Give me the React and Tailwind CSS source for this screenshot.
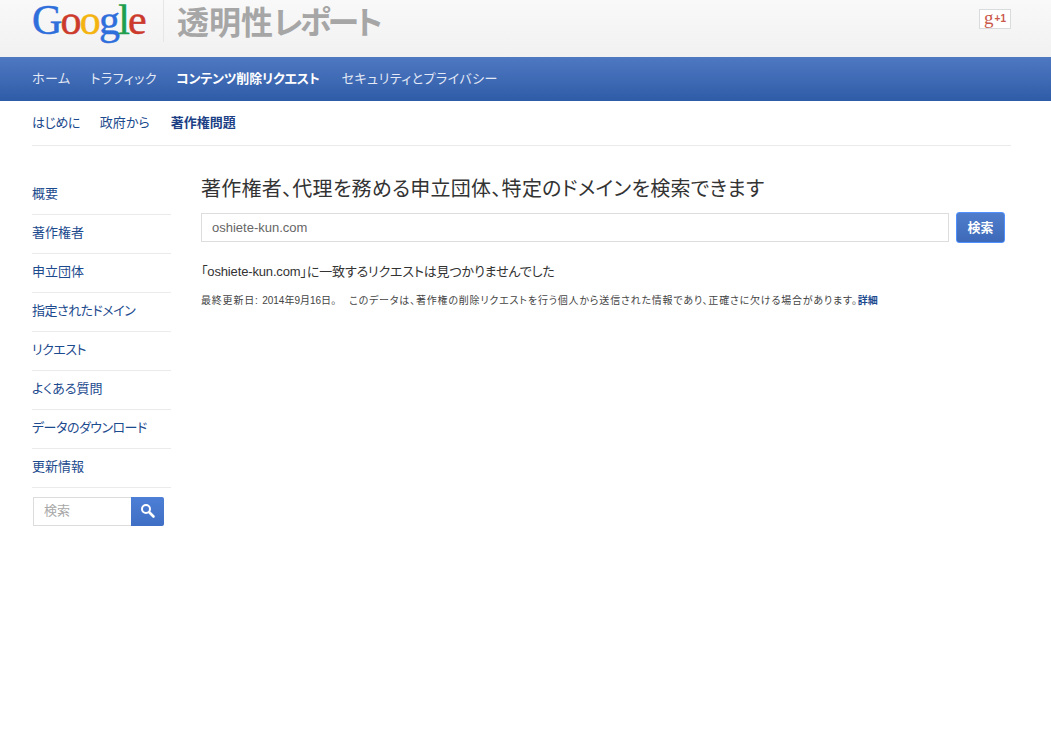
const FONT = "font-['Liberation_Sans','Noto_Sans_CJK_JP',sans-serif] [font-feature-settings:'palt']";

const sideLinks = [
  { label: "概要" },
  { label: "著作権者" },
  { label: "申立団体" },
  { label: "指定されたドメイン", tight: true },
  { label: "リクエスト", tight: true },
  { label: "よくある質問" },
  { label: "データのダウンロード", tight: true },
  { label: "更新情報" },
];

function Logo() {
  return (
    <svg width="118" height="46" className="block" fontFamily="'Liberation Serif', serif" fontSize="42" letterSpacing="-1.8" strokeWidth="0.5">
      <text x="0" y="34">
        <tspan fill="#2f6fdc" stroke="#2f6fdc">G</tspan>
        <tspan fill="#cc3a2c" stroke="#cc3a2c">o</tspan>
        <tspan fill="#f4b40f" stroke="#f4b40f">o</tspan>
        <tspan fill="#2f6fdc" stroke="#2f6fdc">g</tspan>
        <tspan fill="#1f9e4d" stroke="#1f9e4d">l</tspan>
        <tspan fill="#cc3a2c" stroke="#cc3a2c">e</tspan>
      </text>
    </svg>
  );
}

function Header() {
  return (
    <div className="h-[57px] bg-gradient-to-b from-[#f9f9f9] to-[#f1f1f1] pl-8 pr-10 flex justify-between">
      <div className="flex items-start">
        <Logo />
        <div className="ml-[13px] w-px h-[42px] bg-[#e6e6e6]" />
        <div className="ml-[13px] mt-[3px] text-[32px] leading-[40px] font-bold text-[#a6a6a6] whitespace-nowrap">
          透明性<span className="tracking-[-3px]">レポート</span>
        </div>
      </div>
      <div className="mt-[9px] w-[32px] h-[20px] border border-[#d8dcdc] bg-white flex items-center justify-center gap-px text-[#c9584a] font-['Liberation_Serif',serif]">
        <span className="text-[19px] leading-[16px] pb-[3px]">g</span>
        <span className="text-[10px] leading-[18px] font-bold font-['Liberation_Sans',sans-serif]">+1</span>
      </div>
    </div>
  );
}

function TopNav() {
  return (
    <div className="h-[44px] bg-gradient-to-b from-[#4f78c2] to-[#2f5ca7] pl-8 pr-10 flex items-center gap-[19px] text-[13px] tracking-[0.45px] text-[#e3e9f5]">
      <span className="mr-px">ホーム</span>
      <span>トラフィック</span>
      <span className="font-bold text-white tracking-[-0.15px]">コンテンツ削除リクエスト</span>
      <span className="ml-[3px]">セキュリティとプライバシー</span>
    </div>
  );
}

function SubNav() {
  return (
    <div className="ml-8 mr-10 h-[45px] border-b border-[#ebebeb] flex items-center gap-[20px] text-[13px] pb-px text-[#1c4a8e]">
      <span className="tracking-[-0.5px]">はじめに</span>
      <span>政府から</span>
      <span className="ml-px font-bold text-[#1c3f86]">著作権問題</span>
    </div>
  );
}

function Sidebar() {
  return (
    <div className="w-[139px] pt-[30px]">
      {sideLinks.map((l) => (
        <div
          key={l.label}
          className={`h-[39px] pb-[2px] border-b border-[#ebebeb] flex items-center text-[13px] text-[#1c4a8e] ${l.tight ? "tracking-[-0.5px]" : ""}`}
        >
          {l.label}
        </div>
      ))}
      <div className="mt-[9px] ml-px flex h-[29px] w-[131px]">
        <div className="w-[98px] border border-[#dcdcdc] border-r-0 pl-[10px] text-[13px] leading-[25px] text-[#a8a8a8]">検索</div>
        <div className="w-[33px] rounded-r-[2px] bg-gradient-to-b from-[#4d7fd6] to-[#3f6fc4] flex items-center justify-center pb-[2px]">
          <svg width="16" height="16" viewBox="0 0 16 16" fill="none" stroke="white">
            <circle cx="6" cy="6" r="4" strokeWidth="2" />
            <path d="M9.5 9.5 L13.5 13.5" strokeWidth="2.6" strokeLinecap="round" />
          </svg>
        </div>
      </div>
    </div>
  );
}

function Main() {
  return (
    <div className="ml-[30px] flex-1 pt-[29px]">
      <h1 className="text-[20px] leading-[28px] font-normal text-[#333] tracking-[0.27px] whitespace-nowrap">
        著作権者、代理を務める申立団体、特定のドメインを検索できます
      </h1>
      <div className="mt-[10px] flex items-start">
        <div className="w-[748px] h-[29px] border border-[#dddddd] pl-[10px] text-[13px] leading-[27px] text-[#666]">
          oshiete-kun.com
        </div>
        <div className="ml-[7px] -mt-px w-[49px] h-[31px] rounded-[3px] border border-[#4d90fe] bg-gradient-to-b from-[#4f7dcc] to-[#3d69b8] text-white font-bold text-[13px] leading-[29px] text-center">
          検索
        </div>
      </div>
      <p className="mt-[20px] text-[13px] leading-[18px] text-[#333] tracking-[-0.15px] whitespace-nowrap">
        「oshiete-kun.com」に一致するリクエストは見つかりませんでした
      </p>
      <p className="mt-[13px] text-[10px] leading-[14px] text-[#444] tracking-[0.8px] whitespace-nowrap">
        最終更新日: <span className="tracking-normal mr-[13px]">2014年9月16日。</span>
        このデータは、著作権の削除リクエストを行う個人から送信された情報であり、正確さに欠ける場合があります。
        <span className="text-[#1c4a8e] font-bold tracking-normal">詳細</span>
      </p>
    </div>
  );
}

export default function App() {
  return (
    <div className={`${FONT} bg-white min-h-[756px] overflow-hidden`}>
      <Header />
      <TopNav />
      <SubNav />
      <div className="ml-8 mr-10 flex">
        <Sidebar />
        <Main />
      </div>
    </div>
  );
}
